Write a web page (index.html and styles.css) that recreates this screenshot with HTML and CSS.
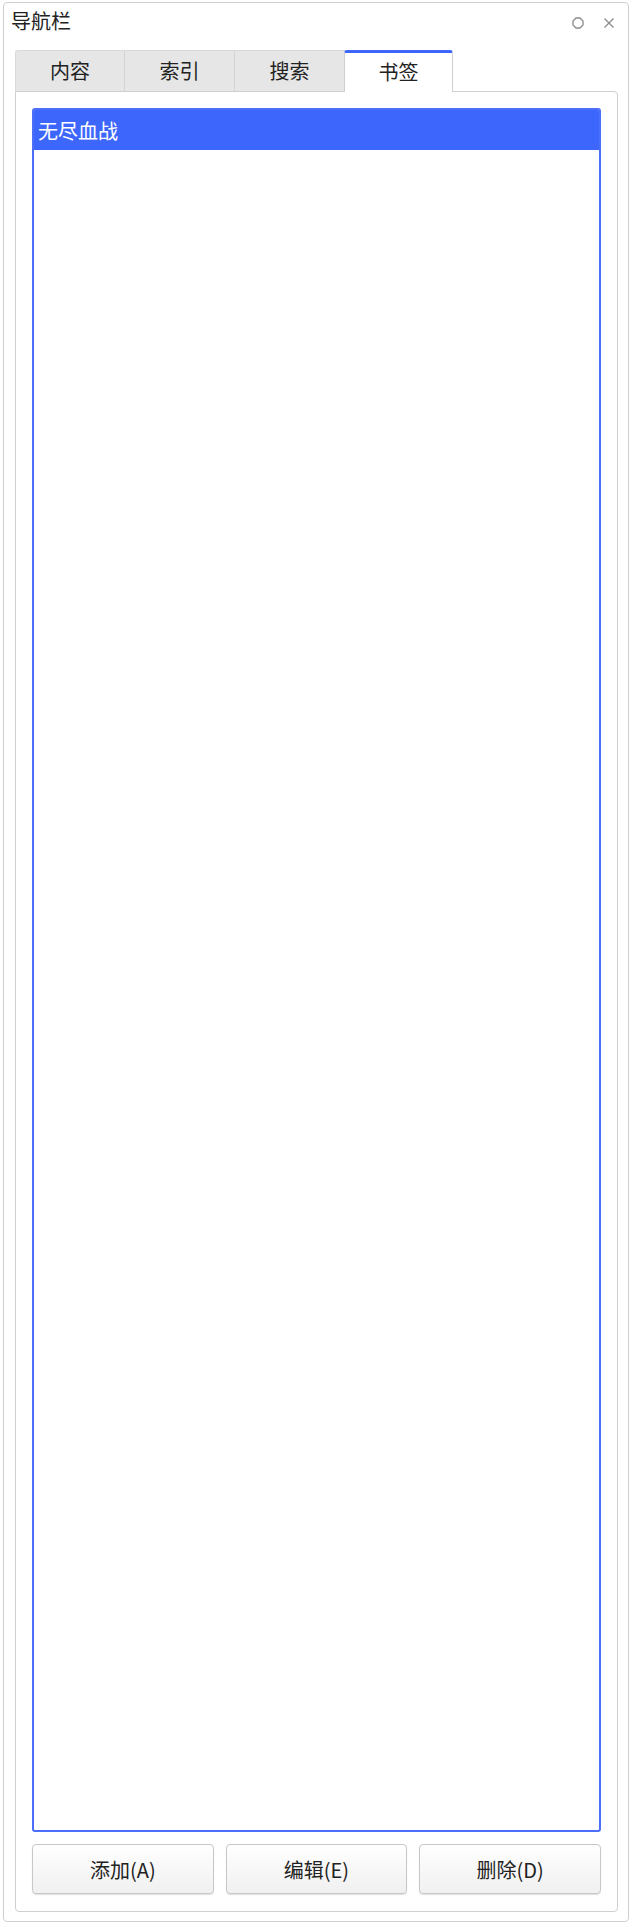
FILE: index.html
```html
<!DOCTYPE html>
<html lang="zh">
<head>
<meta charset="utf-8">
<title>导航栏</title>
<link rel="stylesheet" href="styles.css">
</head>
<body>
<div class="window">
  <div class="titlebar">
    <span class="title">导航栏</span>
    <div class="tools">
      <svg class="icon" width="12" height="12" viewBox="0 0 12 12"><polygon points="4,1 8,1 11,4 11,8 8,11 4,11 1,8 1,4" fill="none" stroke="#8a8a8a" stroke-width="1.3"/></svg>
      <svg class="icon" width="12" height="12" viewBox="0 0 12 12"><path d="M1.5 1.5 L10.5 10.5 M10.5 1.5 L1.5 10.5" stroke="#8a8a8a" stroke-width="1.3" fill="none"/></svg>
    </div>
  </div>
  <div class="tabs">
    <div class="tab first">内容</div>
    <div class="tab">索引</div>
    <div class="tab">搜索</div>
    <div class="tab active">书签</div>
  </div>
  <div class="panel">
    <div class="list">
      <div class="item selected">无尽血战</div>
    </div>
    <div class="buttons">
      <button class="btn">添加(A)</button>
      <button class="btn">编辑(E)</button>
      <button class="btn">删除(D)</button>
    </div>
  </div>
</div>
</body>
</html>
```
FILE: styles.css
```css
* { box-sizing: border-box; }
html, body { margin: 0; padding: 0; background: #ffffff; }
body {
  font-family: "Noto Sans CJK SC", "Noto Sans", sans-serif;
  color: #222222;
  width: 631px;
  height: 1927px;
}
.window {
  margin: 2px 0 0 3px;
  width: 626px;
  height: 1920px;
  border: 1px solid #cfcfcf;
  border-radius: 4px;
  padding: 0 0 0 11px;
  display: flex;
  flex-direction: column;
  align-items: flex-start;
}
.titlebar {
  height: 47px;
  display: flex;
  align-items: flex-start;
  justify-content: space-between;
  padding: 4px 10px 0 0;
  margin-left: -4px;
  width: calc(100% + 4px);
}
.title {
  font-size: 20px;
  line-height: 28px;
  color: #222;
}
.tools {
  display: flex;
  gap: 19px;
  padding-top: 10px;
  padding-right: 3px;
}
.icon { display: block; }
.tabs {
  display: flex;
  height: 42px;
  position: relative;
  z-index: 1;
}
.tab {
  width: 110px;
  height: 41px;
  background: #e6e6e6;
  border-top: 1px solid #d9d9d9;
  border-right: 1px solid #d4d4d4;
  font-size: 20px;
  line-height: 40px;
  text-align: center;
  color: #222;
}
.tab.first {
  border-left: 1px solid #d9d9d9;
  border-top-left-radius: 3px;
}
.tab.active {
  width: 109px;
  height: 42px;
  background: #ffffff;
  border-top: 3px solid #3d66fd;
  border-left: 1px solid #cfcfcf;
  border-right: 1px solid #cfcfcf;
  border-radius: 3px 3px 0 0;
  line-height: 38px;
  margin-left: -1px;
}
.panel {
  margin-top: -1px;
  width: 603px;
  height: 1821px;
  border: 1px solid #cfcfcf;
  border-radius: 0 4px 4px 4px;
  padding: 16px 16px 17px 16px;
  display: flex;
  flex-direction: column;
  gap: 12px;
}
.list {
  flex: 1;
  border: 2px solid #4b6ff8;
  border-radius: 3px;
  background: #ffffff;
  overflow: hidden;
}
.item {
  height: 40px;
  font-size: 20px;
  line-height: 38px;
  padding-left: 4px;
}
.item.selected {
  background: #3d66fd;
  color: #ffffff;
  margin: -2px -2px 0 -2px;
  height: 42px;
  padding: 3px 0 0 6px;
  line-height: 39px;
}
.buttons {
  display: grid;
  grid-template-columns: 1fr 1fr 1fr;
  gap: 12px;
  height: 50px;
}
.btn {
  height: 50px;
  border: 1px solid #c7c7c7;
  border-radius: 4px;
  background: linear-gradient(#ffffff, #f0f0f0);
  box-shadow: 0 1px 1px rgba(0, 0, 0, 0.12);
  font-family: "Noto Sans CJK SC", "Noto Sans", sans-serif;
  font-size: 20px;
  color: #222;
  padding: 0;
}
```
